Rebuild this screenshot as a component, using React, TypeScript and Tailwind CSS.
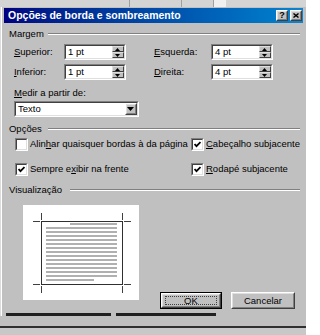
import React from "react";

const font = "font-['Liberation_Sans',Arial,sans-serif]";

const Raised: React.FC<{ className?: string; children?: React.ReactNode }> = ({ className = "", children }) => (
  <div className={`border border-t-white border-l-white border-b-[#404040] border-r-[#404040] ${className}`}>
    <div className="flex h-full w-full items-center justify-center border border-t-[#dfdfdf] border-l-[#dfdfdf] border-b-[#808080] border-r-[#808080] bg-[#c0c0c0]">
      {children}
    </div>
  </div>
);

const Sunken: React.FC<{ className?: string; children?: React.ReactNode }> = ({ className = "", children }) => (
  <div className={`border border-t-[#808080] border-l-[#808080] border-b-white border-r-white ${className}`}>
    <div className="flex h-full w-full items-center border border-t-[#404040] border-l-[#404040] border-b-[#dfdfdf] border-r-[#dfdfdf] bg-white">
      {children}
    </div>
  </div>
);

const Header: React.FC<{ label: string; gap: string }> = ({ label, gap }) => (
  <div className={`flex h-[12px] items-center ${gap}`}>
    <span className="leading-none">{label}</span>
    <div className="h-[2px] flex-1 border-t border-b border-t-[#808080] border-b-white" />
  </div>
);

const Arrow: React.FC<{ up?: boolean; w?: number; h?: number }> = ({ up, w = 5, h = 3 }) => (
  <svg width={w} height={h} viewBox={`0 0 ${w} ${h}`} className="block">
    <polygon points={up ? `0,${h} ${w},${h} ${w / 2},0` : `0,0 ${w},0 ${w / 2},${h}`} fill="#000" />
  </svg>
);

const MiniBtn: React.FC<{ up?: boolean }> = ({ up }) => (
  <div className="flex h-[6px] w-[12px] items-center justify-center border border-t-[#dfdfdf] border-l-[#dfdfdf] border-b-[#404040] border-r-[#404040] bg-[#c0c0c0]">
    <Arrow up={up} w={5} h={3} />
  </div>
);

const SpinField: React.FC<{ value: string }> = ({ value }) => (
  <Sunken className="h-[16px] w-[62px]">
    <span className="flex-1 pl-[2px] leading-none">{value}</span>
    <div className="flex flex-col">
      <MiniBtn up />
      <MiniBtn />
    </div>
  </Sunken>
);

const Check: React.FC<{ checked?: boolean }> = ({ checked }) => (
  <Sunken className="h-[13px] w-[13px] shrink-0">
    <div className="flex h-full w-full items-center justify-center">
      {checked && (
        <svg width="7" height="7" viewBox="0 0 7 7" className="block">
          <polyline points="0.5,3 2.5,5.2 6.5,1" fill="none" stroke="#000" strokeWidth="1.8" />
        </svg>
      )}
    </div>
  </Sunken>
);

const Preview: React.FC = () => {
  const lines = Array.from({ length: 15 }, (_, i) => i);
  const mark = "#404040";
  return (
    <svg width="116" height="95" viewBox="0 0 116 95" className="block shrink-0">
      <rect x="0" y="0" width="116" height="95" fill="#fff" />
      <rect x="18.5" y="16.5" width="81" height="63" fill="#fff" stroke="#303030" />
      {lines.map((i) => {
        const y = 18 + i * 4;
        const x1 = i === 0 ? 47 : 23;
        const x2 = i === 14 ? 71 : 94;
        return <rect key={i} x={x1} y={y} width={x2 - x1} height="2" fill="#b0b0b0" />;
      })}
      <line x1="18.5" y1="8" x2="18.5" y2="15" stroke={mark} />
      <line x1="10" y1="16.5" x2="17" y2="16.5" stroke={mark} />
      <line x1="99.5" y1="8" x2="99.5" y2="15" stroke={mark} />
      <line x1="101" y1="16.5" x2="108" y2="16.5" stroke={mark} />
      <line x1="18.5" y1="81" x2="18.5" y2="88" stroke={mark} />
      <line x1="10" y1="79.5" x2="17" y2="79.5" stroke={mark} />
      <line x1="99.5" y1="81" x2="99.5" y2="88" stroke={mark} />
      <line x1="101" y1="79.5" x2="108" y2="79.5" stroke={mark} />
    </svg>
  );
};

const App: React.FC = () => {
  return (
    <div className={`flex h-[335px] w-[306px] flex-col overflow-hidden whitespace-nowrap bg-[#c0c0c0] text-[9.5px] text-black ${font}`}>
      {/* strip of the window behind */}
      <div className="flex h-[7px] bg-[#d4d4d4]">
        <div className="w-[130px] border-r border-[#a0a0a0]" />
        <div className="w-[52px] border-r border-[#a0a0a0]" />
        <div className="w-[32px] border-r border-[#a0a0a0]" />
        <div className="w-[12px] bg-[#f0f0f0]" />
        <div className="flex-1" />
      </div>

      <div className="flex">
        <div className="w-[3px] bg-[#dcdcdc]" />
        <div className="flex flex-1 flex-col border-l border-white pl-[2px] pr-[3px] pt-[1px]">
          {/* title bar */}
          <div className="flex h-[15px] items-center bg-gradient-to-r from-[#000080] to-[#1084d0] pl-[4px] pr-[1px]">
            <span className="flex-1 text-[10.5px] font-bold leading-none text-white">Opções de borda e sombreamento</span>
            <div className="flex gap-[2px]">
              <Raised className="h-[11px] w-[12px]">
                <span className="text-[9px] font-bold leading-none">?</span>
              </Raised>
              <Raised className="h-[11px] w-[12px]">
                <svg width="6" height="5" viewBox="0 0 6 5" className="block">
                  <path d="M0.5 0.5 L5.5 4.5 M5.5 0.5 L0.5 4.5" stroke="#000" strokeWidth="1.4" />
                </svg>
              </Raised>
            </div>
          </div>

          <div className="flex flex-col pl-[5px] pr-[3px]">
            <div className="mt-[5px]">
              <Header label="Margem" gap="gap-[4px]" />
            </div>

            <div className="mt-[4px] flex flex-col gap-[4px] pl-[5px]">
              <div className="flex h-[16px] items-center">
                <span className="w-[50px]"><u>S</u>uperior:</span>
                <SpinField value="1 pt" />
                <span className="ml-[28px] w-[57px]"><u>E</u>squerda:</span>
                <SpinField value="4 pt" />
              </div>
              <div className="flex h-[16px] items-center">
                <span className="w-[50px]"><u>I</u>nferior:</span>
                <SpinField value="1 pt" />
                <span className="ml-[28px] w-[57px]"><u>D</u>ireita:</span>
                <SpinField value="4 pt" />
              </div>
            </div>

            <div className="mt-[8px] flex h-[11px] items-center pl-[5px]">
              <span><u>M</u>edir a partir de:</span>
            </div>
            <div className="mt-[2px] pl-[5px]">
              <Sunken className="h-[16px] w-[125px]">
                <span className="flex-1 pl-[2px] leading-none">Texto</span>
                <Raised className="h-[12px] w-[12px]">
                  <Arrow w={7} h={4} />
                </Raised>
              </Sunken>
            </div>

            <div className="mt-[6px]">
              <Header label="Opções" gap="gap-[6px]" />
            </div>

            <div className="mt-[3px] flex flex-col gap-[12px] pl-[6px]">
              <div className="flex h-[13px] items-center">
                <div className="flex w-[176px] items-center gap-[2px]">
                  <Check />
                  <span>Alin<u>h</u>ar quaisquer bordas à da página</span>
                </div>
                <div className="flex items-center gap-[2px]">
                  <Check checked />
                  <span><u>C</u>abeçalho subjacente</span>
                </div>
              </div>
              <div className="flex h-[13px] items-center">
                <div className="flex w-[176px] items-center gap-[2px]">
                  <Check checked />
                  <span>Sempre e<u>x</u>ibir na frente</span>
                </div>
                <div className="flex items-center gap-[2px]">
                  <Check checked />
                  <span><u>R</u>odapé subjacente</span>
                </div>
              </div>
            </div>

            <div className="mt-[8px]">
              <Header label="Visualização" gap="gap-[8px]" />
            </div>

            <div className="mt-[9px] flex h-[104px] items-start pl-[14px]">
              <Preview />
              <div className="ml-[21px] mt-[87px] flex gap-[9px]">
                <div className="h-[17px] w-[62px] border border-black">
                  <Raised className="h-full w-full">
                    <div className="flex h-[9px] w-[52px] items-center justify-center border border-dotted border-[#404040]">
                      <span className="leading-none">OK</span>
                    </div>
                  </Raised>
                </div>
                <Raised className="h-[17px] w-[64px]">
                  <span className="leading-none">Cancelar</span>
                </Raised>
              </div>
            </div>
          </div>

          {/* bottom edge */}
          <div className="mt-[4px] flex h-[3px] pl-[2px]">
            <div className="w-[105px] bg-[#202020]" />
            <div className="w-[5px]" />
            <div className="w-[100px] bg-[#202020]" />
          </div>
        </div>
      </div>

      <div className="h-[10px]" />
      <div className="h-[2px] bg-[#303030]" />
      <div className="flex-1 bg-[#c8c8c8]" />
    </div>
  );
};

export default App;
